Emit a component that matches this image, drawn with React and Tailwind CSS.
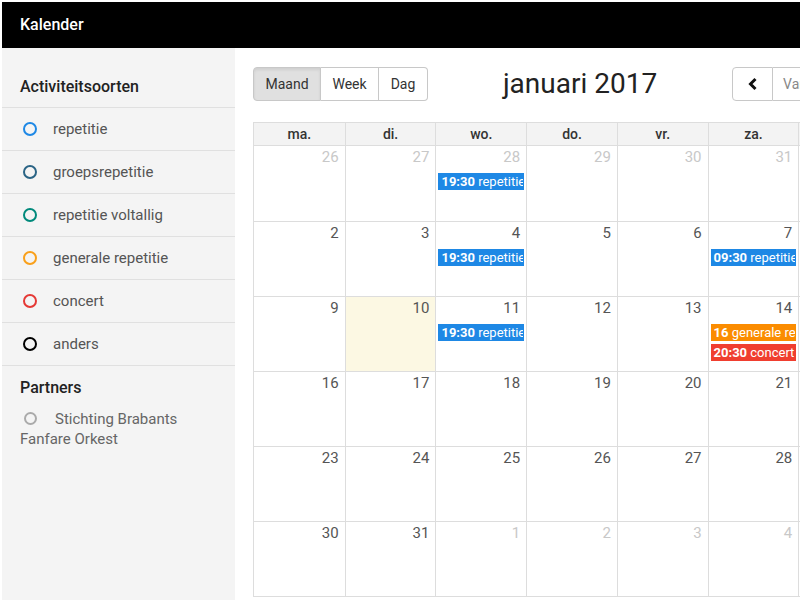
import React from 'react';

const types = [
  { label: 'repetitie', color: 'border-[#1e88e5]' },
  { label: 'groepsrepetitie', color: 'border-[#2a6485]' },
  { label: 'repetitie voltallig', color: 'border-[#00897b]' },
  { label: 'generale repetitie', color: 'border-[#f9a01b]' },
  { label: 'concert', color: 'border-[#e53935]' },
  { label: 'anders', color: 'border-black' },
];

const days = ['ma.', 'di.', 'wo.', 'do.', 'vr.', 'za.', 'zo.'];

const weeks = [
  [26, 27, 28, 29, 30, 31, 1],
  [2, 3, 4, 5, 6, 7, 8],
  [9, 10, 11, 12, 13, 14, 15],
  [16, 17, 18, 19, 20, 21, 22],
  [23, 24, 25, 26, 27, 28, 29],
  [30, 31, 1, 2, 3, 4, 5],
];

const blue = 'bg-[#1e88e5] border-[#1e88e5]';
const events = {
  '0-2': [{ time: '19:30', title: 'repetitie', cls: blue }],
  '1-2': [{ time: '19:30', title: 'repetitie', cls: blue }],
  '1-5': [{ time: '09:30', title: 'repetitie', cls: blue }],
  '2-2': [{ time: '19:30', title: 'repetitie', cls: blue }],
  '2-5': [
    { time: '16', title: 'generale repetitie', cls: 'bg-[#fb8c00] border-[#fb8c00]' },
    { time: '20:30', title: 'concert', cls: 'bg-[#f03e2f] border-[#f03e2f]' },
  ],
};

function isOther(w, n) {
  return (w === 0 && n > 20) || (w === 5 && n < 10);
}

export default function App() {
  return (
    <div className="h-screen w-[800px] overflow-hidden bg-white pt-[2px] pl-[2px] font-['Roboto',sans-serif]">
      {/* Header */}
      <header className="h-[46px] bg-black flex items-center px-[18px]">
        <h1 className="text-white text-[16px] font-medium">Kalender</h1>
      </header>

      <div className="flex h-[552px]">
        {/* Sidebar */}
        <aside className="w-[233px] shrink-0 bg-[#f4f4f4] flex flex-col">
          <h2 className="px-[18px] pt-[28px] pb-[9px] text-[16px] font-medium text-[#222] leading-[22px]">
            Activiteitsoorten
          </h2>
          <ul className="border-t border-[#e0e0e0]">
            {types.map((t) => (
              <li
                key={t.label}
                className="h-[43px] flex items-center border-b border-[#e0e0e0] pl-[21px]"
              >
                <span className={`w-[14px] h-[14px] rounded-full border-2 ${t.color}`} />
                <span className="ml-[16px] text-[15px] text-[#555]">{t.label}</span>
              </li>
            ))}
          </ul>
          <h2 className="px-[18px] pt-[11px] text-[16px] font-medium text-[#222] leading-[22px]">
            Partners
          </h2>
          <p className="px-[18px] pt-[10px] text-[15px] text-[#666] leading-[20px]">
            <span className="inline-block w-[13px] h-[13px] rounded-full border-2 border-[#aaa] ml-[4px] mr-[18px] align-[-1px]" />
            Stichting Brabants Fanfare Orkest
          </p>
        </aside>

        {/* Main */}
        <main className="flex-1 overflow-hidden pl-[18px] pt-[19px]">
          <div className="w-[637px]">
            {/* Toolbar */}
            <div className="flex items-center justify-between h-[34px]">
              <div className="flex text-[14px] text-[#333]">
                <button className="h-[34px] w-[68px] bg-[#e0e0e0] border border-[#c8c8c8] rounded-l-[4px] shadow-[inset_0_2px_3px_rgba(0,0,0,0.08)]">
                  Maand
                </button>
                <button className="h-[34px] w-[58px] bg-white border border-l-0 border-[#c8c8c8]">
                  Week
                </button>
                <button className="h-[34px] w-[49px] bg-white border border-l-0 border-[#c8c8c8] rounded-r-[4px]">
                  Dag
                </button>
              </div>
              <h2 className="text-[28px] text-[#222] font-normal">januari 2017</h2>
              <div className="flex text-[14px] text-[#333]">
                <button className="h-[34px] w-[41px] flex items-center justify-center bg-white border border-[#c8c8c8] rounded-l-[4px]">
                  <svg width="12" height="14" viewBox="0 0 12 14">
                    <path d="M8.5 2 L3.5 7 L8.5 12" fill="none" stroke="#111" strokeWidth="3" />
                  </svg>
                </button>
                <button className="h-[34px] px-[10px] bg-white border border-l-0 border-[#c8c8c8] text-[#888]">
                  Vandaag
                </button>
                <button className="h-[34px] w-[41px] flex items-center justify-center bg-white border border-l-0 border-[#c8c8c8] rounded-r-[4px]">
                  <svg width="12" height="14" viewBox="0 0 12 14">
                    <path d="M3.5 2 L8.5 7 L3.5 12" fill="none" stroke="#111" strokeWidth="3" />
                  </svg>
                </button>
              </div>
            </div>

            {/* Calendar */}
            <div className="mt-[21px] border border-[#ddd]">
              <div className="grid grid-cols-7 bg-[#f3f3f3] border-b border-[#ddd]">
                {days.map((d, i) => (
                  <div
                    key={d}
                    className={`h-[22px] flex items-center justify-center text-[14px] font-medium text-[#333] ${i > 0 ? 'border-l border-[#ddd]' : ''}`}
                  >
                    {d}
                  </div>
                ))}
              </div>
              {weeks.map((week, w) => (
                <div key={w} className={`grid grid-cols-7 h-[75px] ${w > 0 ? 'border-t border-[#ddd]' : ''}`}>
                  {week.map((n, d) => {
                    const today = w === 2 && d === 1;
                    const ev = events[`${w}-${d}`] || [];
                    return (
                      <div
                        key={d}
                        className={`${d > 0 ? 'border-l border-[#ddd]' : ''} ${today ? 'bg-[#fcf8e3]' : ''} flex flex-col`}
                      >
                        <div
                          className={`text-right pr-[6px] pt-0 text-[15px] leading-[22px] ${isOther(w, n) ? 'text-[#c8c8c8]' : 'text-[#555]'}`}
                        >
                          {n}
                        </div>
                        <div className="flex flex-col gap-[3px] mt-[5px]">
                          {ev.map((e, k) => (
                            <div
                              key={k}
                              className={`mx-[2px] h-[17px] px-[2px] border text-white text-[13px] leading-[15px] whitespace-nowrap overflow-hidden ${e.cls}`}
                            >
                              <span className="font-bold">{e.time}</span> {e.title}
                            </div>
                          ))}
                        </div>
                      </div>
                    );
                  })}
                </div>
              ))}
            </div>
          </div>
        </main>
      </div>
    </div>
  );
}
